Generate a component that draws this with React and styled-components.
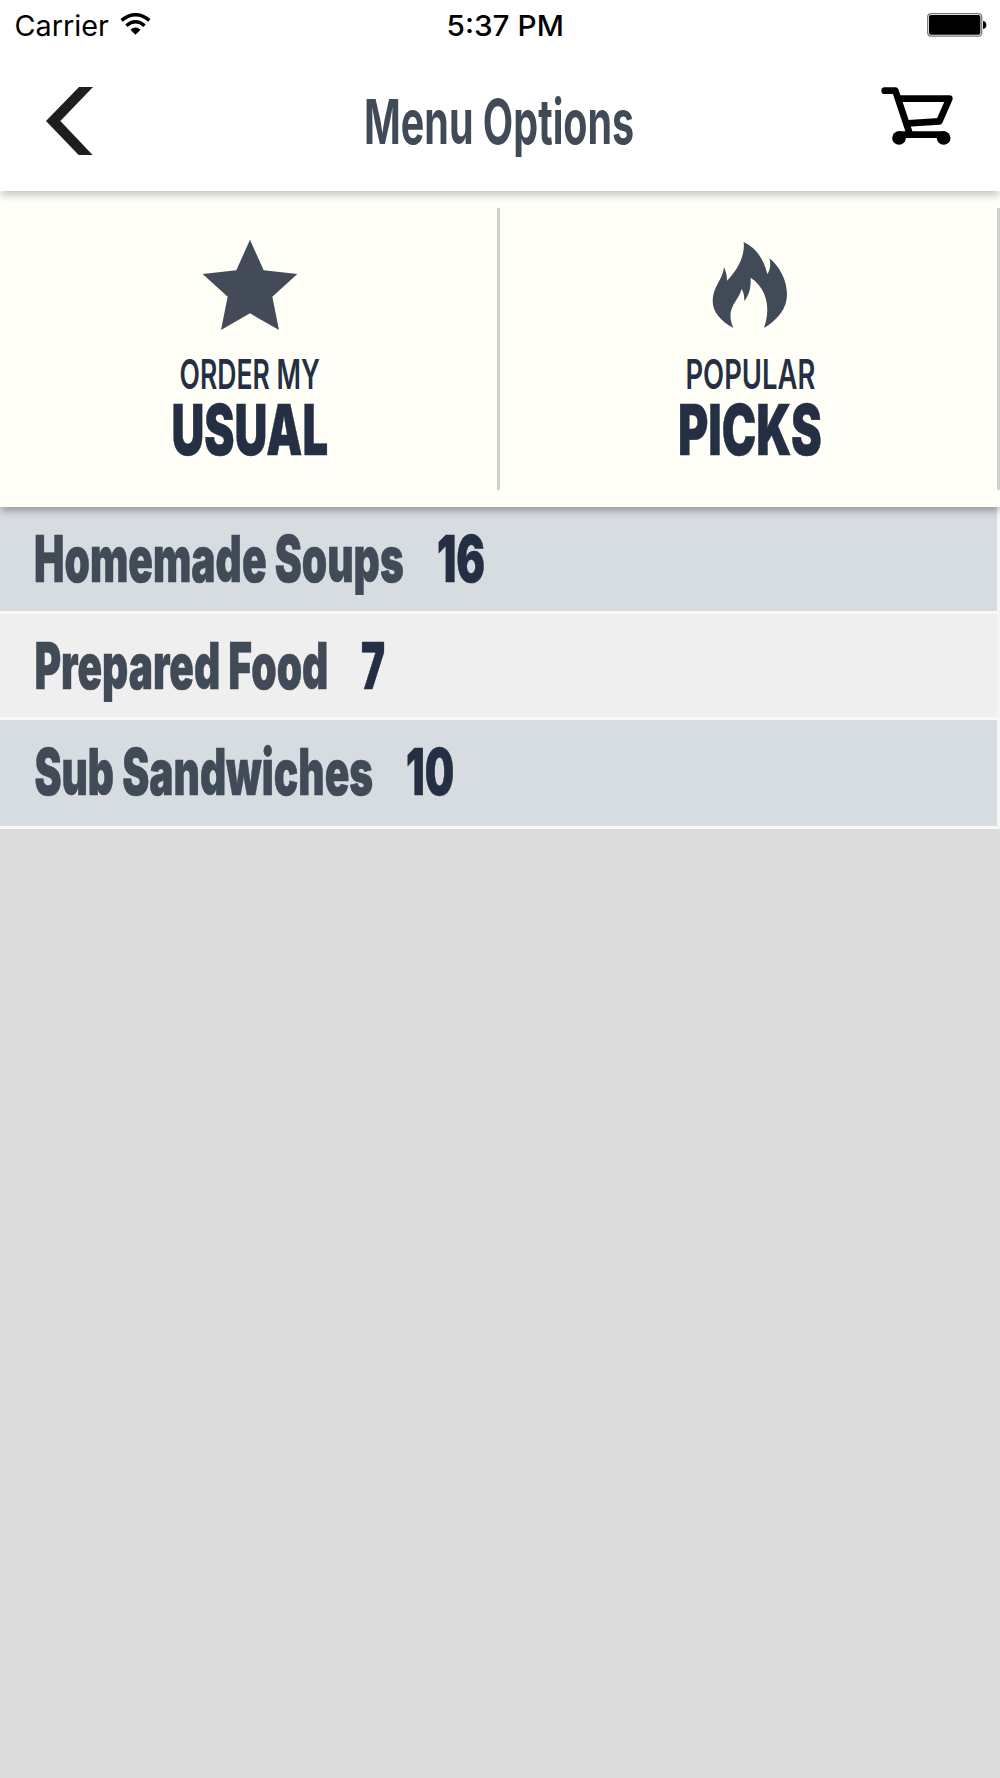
import { useLayoutEffect, useRef, useState } from "react";
import styled, { createGlobalStyle } from "styled-components";

const categories = [
  { name: "Homemade Soups", nameWidth: 370, count: 16, countWidth: 48 },
  { name: "Prepared Food", nameWidth: 294, count: 7, countWidth: 24 },
  { name: "Sub Sandwiches", nameWidth: 339, count: 10, countWidth: 48 },
];

// squeezes a single line of text into the given width
function FitText({ width, children }) {
  const ref = useRef(null);
  const [scale, setScale] = useState(1);

  useLayoutEffect(() => {
    setScale(width / ref.current.offsetWidth);
  }, [width, children]);

  return (
    <FitBox $width={width}>
      <FitInner ref={ref} style={{ transform: `scaleX(${scale})` }}>
        {children}
      </FitInner>
    </FitBox>
  );
}

export default function App() {
  return (
    <Screen>
      <GlobalStyle />
      <Header>
        <StatusBar>
          <Carrier>
            <FitText width={94}>Carrier</FitText>
            <WifiIcon />
          </Carrier>
          <Time>
            <FitText width={117}>5:37 PM</FitText>
          </Time>
          <BatteryIcon />
        </StatusBar>
        <NavBar>
          <BackIcon />
          <Title>
            <FitText width={270}>Menu Options</FitText>
          </Title>
          <CartIcon />
        </NavBar>
      </Header>

      <Shortcuts>
        <Shortcut>
          <StarIcon />
          <ShortcutLabel>
            <FitText width={140}>ORDER MY</FitText>
          </ShortcutLabel>
          <ShortcutName>
            <FitText width={157}>USUAL</FitText>
          </ShortcutName>
        </Shortcut>
        <Shortcut>
          <FlameIcon />
          <ShortcutLabel>
            <FitText width={130}>POPULAR</FitText>
          </ShortcutLabel>
          <ShortcutName>
            <FitText width={144}>PICKS</FitText>
          </ShortcutName>
        </Shortcut>
      </Shortcuts>

      <CategoryList>
        {categories.map((item) => (
          <Category key={item.name}>
            <FitText width={item.nameWidth}>{item.name}</FitText>
            <Count>
              <FitText width={item.countWidth}>{item.count}</FitText>
            </Count>
          </Category>
        ))}
      </CategoryList>
    </Screen>
  );
}

function WifiIcon() {
  return (
    <svg width="31" height="23" viewBox="0 0 31 23">
      <g fill="none" stroke="#000" strokeWidth="3.4">
        <path d="M1.6 7.4Q15.5 -4 29.4 7.4" />
        <path d="M6.4 12.7Q15.5 4.8 24.6 12.7" />
      </g>
      <path d="M10.4 16.8Q15.5 12.4 20.6 16.8L15.5 21.8Z" />
    </svg>
  );
}

function BatteryIcon() {
  return (
    <svg width="60" height="24" viewBox="0 0 60 24">
      <rect x="0.7" y="0.7" width="54" height="22.4" rx="3.4" fill="#fff" stroke="#777" strokeWidth="1.2" />
      <rect x="2" y="2" width="51.4" height="19.8" rx="2" />
      <path d="M56 8Q59.4 8.6 59.4 12T56 16Z" />
    </svg>
  );
}

function BackIcon() {
  return (
    <svg width="47" height="68" viewBox="0 0 141 204">
      <path d="M0 102L99 0H141L43 102L140 204H98Z" fill="#1e1e1e" />
    </svg>
  );
}

function CartIcon() {
  return (
    <svg width="72" height="58" viewBox="0 0 216 174">
      <g fill="none" stroke="#000" strokeWidth="20" strokeLinecap="round" strokeLinejoin="round">
        <path d="M11 11H43L84 134" />
        <path d="M54 35H205L175 103L80 109" />
        <path d="M54 143H188" />
      </g>
      <circle cx="54" cy="153" r="20.5" />
      <circle cx="188" cy="153" r="20.5" />
    </svg>
  );
}

function StarIcon() {
  return (
    <svg width="96" height="92" viewBox="0 0 288 276">
      <path
        d="M144 2L185 94L286 105L211 173L231 273L144 223L57 273L77 173L2 105L103 94Z"
        fill="#434b58"
      />
    </svg>
  );
}

function FlameIcon() {
  return (
    <svg width="96" height="92" viewBox="36 42 288 276">
      <path
        d="M161 51C201 69 221 105 232 147C241 135 243 115 238 100C267 122 291 165 291 208C291 253 261 286 222 309C242 253 233 192 182 158C183 187 178 210 163 228C163 212 161 202 155 192C148 218 131 230 123 258C119 275 123 292 130 309C92 288 68 261 68 228C68 186 98 165 102 127C108 140 111 151 111 167C137 141 166 98 161 51Z"
        fill="#404b57"
      />
    </svg>
  );
}

const GlobalStyle = createGlobalStyle`
  body {
    margin: 0;
    background: #dcdcdc;
  }
`;

const Screen = styled.div`
  width: 1000px;
  height: 1778px;
  overflow: hidden;
  background: #dcdcdc;
  font-family: Inter, "Liberation Sans", sans-serif;
  color: #404b57;
`;

const FitBox = styled.span`
  display: flex;
  justify-content: center;
  flex: none;
  width: ${({ $width }) => $width}px;
`;

const FitInner = styled.span`
  flex: none;
  white-space: nowrap;
`;

const Header = styled.header`
  position: relative;
  z-index: 2;
  height: 191px;
  background: #fff;
  box-shadow: 0 6px 7px -1px rgba(60, 65, 60, 0.26);
`;

const StatusBar = styled.div`
  display: grid;
  grid-template-columns: 1fr auto 1fr;
  align-items: center;
  height: 50px;
  padding: 0 13px 0 15px;
  font-size: 28.5px;
  color: #000;

  > svg {
    justify-self: end;
  }
`;

const Carrier = styled.div`
  display: flex;
  align-items: center;
  gap: 11px;
  margin-top: 1px;

  svg {
    margin-bottom: 3px;
  }
`;

const Time = styled.div`
  margin: 1px 0 0 8px;
  font-weight: 500;
`;

const NavBar = styled.div`
  display: flex;
  align-items: flex-start;
  justify-content: space-between;
  padding: 37px 47px 0 46px;
`;

const Title = styled.h1`
  margin: -5px 0 0 25px;
  font-size: 62px;
  font-weight: 750;
  line-height: 80px;
`;

const Shortcuts = styled.nav`
  position: relative;
  z-index: 1;
  display: grid;
  grid-template-columns: 1fr 1fr;
  height: 316px;
  padding: 17px 0;
  box-sizing: border-box;
  background: #fffff8;
  box-shadow: 0 5px 7px -1px rgba(50, 58, 62, 0.4);
`;

const Shortcut = styled.div`
  display: flex;
  flex-direction: column;
  align-items: center;
  padding: 31px 0 0 3px;
  border-right: 3px solid #d0d1cd;
`;

const ShortcutLabel = styled.div`
  margin-top: 20px;
  font-size: 41.5px;
  font-weight: 600;
  line-height: 46px;
  color: #242f44;
`;

const ShortcutName = styled.div`
  font-size: 70px;
  font-weight: 900;
  line-height: 65px;
  color: #242f44;
  -webkit-text-stroke: 0.5px #242f44;
`;

const CategoryList = styled.ul`
  margin: 0;
  padding: 0;
  list-style: none;
`;

const Category = styled.li`
  display: flex;
  align-items: flex-start;
  gap: 33px;
  height: 107px;
  padding: 12px 0 0 34px;
  box-sizing: border-box;
  border-right: 3px solid #f4f5f5;
  border-bottom: 3px solid #f7f8f8;
  background: #d7dce0;
  font-size: 64px;
  font-weight: 900;
  line-height: 80px;
  -webkit-text-stroke: 0.6px currentColor;

  &:nth-child(even) {
    height: 106px;
    background: #efefef;
  }

  &:last-child {
    height: 109px;
  }
`;

const Count = styled.span`
  color: #242f44;
  -webkit-text-stroke-color: #242f44;
`;
